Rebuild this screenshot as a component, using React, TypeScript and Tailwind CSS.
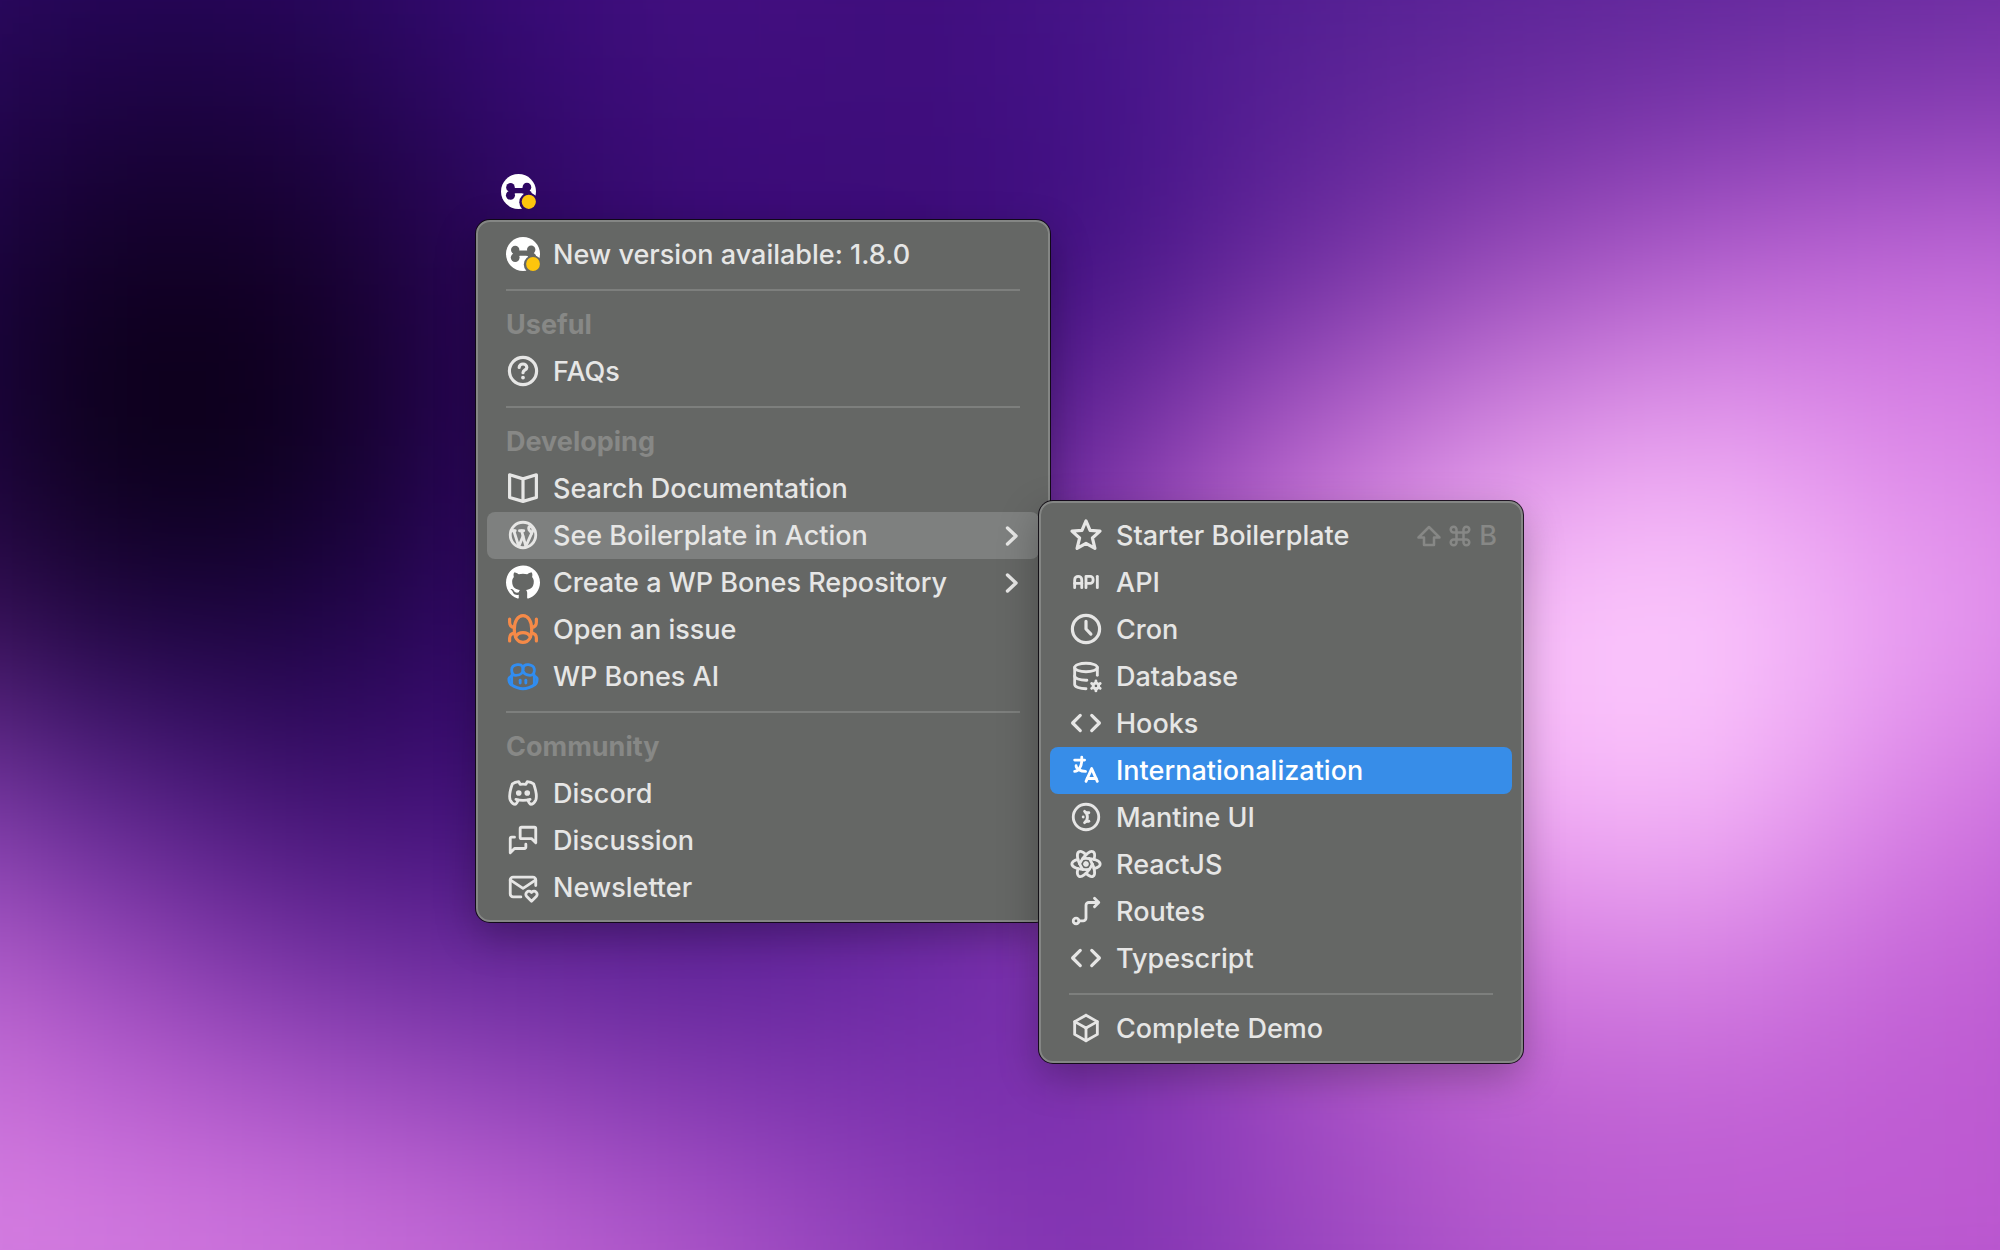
import type { ReactNode } from 'react';
import {
  TbApi,
  TbBox,
  TbBrandDiscord,
  TbBrandGithubCopilot,
  TbBrandMantine,
  TbBrandReact,
  TbBrandWordpress,
  TbDatabaseCog,
  TbLanguage,
  TbMailHeart,
  TbMessages,
} from 'react-icons/tb';
import { SiGithub } from 'react-icons/si';

/* Colour mesh of the wallpaper, blurred together; the outermost cells lie past the window's edges. */
const mesh: string[][] = [
  ['#2e0a66', '#290760', '#2b0762', '#370b78', '#4a1285', '#3f0d7c', '#471588', '#521f92', '#5a2398', '#5e269a', '#64299c', '#6a2ca0'],
  ['#2c0960', '#1d0344', '#1f0448', '#330970', '#3f0e7e', '#3f0d7c', '#44128a', '#562094', '#63289a', '#6f2ea4', '#7a34aa', '#8238b0'],
  ['#22064e', '#100022', '#130026', '#2a0658', '#3a0b75', '#3a0a75', '#3f1080', '#6a2a9e', '#9748b8', '#b860d0', '#c56adb', '#c86edc'],
  ['#240550', '#080012', '#0b0018', '#2c065e', '#360a72', '#3c0c78', '#6f2ba0', '#b862cc', '#e092e8', '#efa8f4', '#dd88e8', '#d880e4'],
  ['#44155f', '#1c0440', '#1a0340', '#340a6a', '#3a0d78', '#451080', '#9a45b8', '#dd88e4', '#fbc4fb', '#ffd2ff', '#eca2f4', '#e08cea'],
  ['#8a44b4', '#5c2590', '#3e1070', '#3f0e78', '#4a1685', '#5e1f98', '#9040b4', '#d078dc', '#f4b0f6', '#fabefb', '#da82e6', '#c868da'],
  ['#c66ed6', '#a44ec2', '#7c36aa', '#6c2ca0', '#602498', '#6c2aa6', '#7a30ac', '#a850c4', '#cf72dc', '#d47ce2', '#c262d6', '#bc58d2'],
  ['#d880e2', '#cc70dc', '#c266d6', '#b058cc', '#9a48c0', '#8638b4', '#7a2eae', '#9a46c0', '#b458cc', '#bd5cd2', '#be5ad2', '#bc58d0'],
  ['#dc86e6', '#da82e4', '#d67ce2', '#d072dc', '#bc60d2', '#9c48c0', '#8836b4', '#9a46c0', '#b85ad0', '#be5cd4', '#be5ad2', '#bc58d0'],
];

function Wallpaper() {
  return (
    <div aria-hidden="true" className="absolute inset-0 overflow-hidden">
      <div className="absolute -inset-x-[10%] -inset-y-[14.3%] grid grid-cols-12 grid-rows-9 blur-[96px]">
        {mesh.map((row, r) =>
          row.map((color, c) => <span key={`${r}-${c}`} style={{ backgroundColor: color }} />),
        )}
      </div>
    </div>
  );
}

function BoneIcon({ id }: { id: string }) {
  return (
    <svg viewBox="0 0 34 34" className="size-full" aria-hidden="true">
      <mask id={id}>
        <rect width="34" height="34" fill="#fff" />
        <g fill="#000">
          <circle cx="9.2" cy="13" r="4.2" />
          <circle cx="9.2" cy="20.6" r="4.4" />
          <circle cx="25.2" cy="12.8" r="4.2" />
          <circle cx="26" cy="20" r="4.2" />
          <path d="M8.5 12.5 13 13.500h8.500l4.500-1v7.500l-6-1.200h-6l-4 1.500-3-4z" />
          <circle cx="27" cy="27.400" r="9.200" />
        </g>
      </mask>
      <circle cx="17" cy="17" r="17" fill="#fff" mask={`url(#${id})`} />
      <circle cx="27" cy="27" r="6.900" fill="#fdc50d" />
    </svg>
  );
}

function Stroke({ children }: { children: ReactNode }) {
  return (
    <svg
      viewBox="0 0 16 16"
      className="size-full"
      fill="none"
      stroke="currentColor"
      strokeWidth="1.5"
      strokeLinecap="round"
      strokeLinejoin="round"
      aria-hidden="true"
    >
      {children}
    </svg>
  );
}

const QuestionIcon = () => (
  <Stroke>
    <circle cx="8" cy="8" r="6.4" />
    <path d="M6.2 6.3C6.2 5.3 7 4.7 8 4.7s1.8.6 1.8 1.6C9.800 7.500 8 7.500 8 8.800" />
    <circle cx="8" cy="11.100" r=".4" fill="currentColor" strokeWidth="1" />
  </Stroke>
);

const BookIcon = () => (
  <Stroke>
    <path d="M8 3.700 1.700 1.800v10.700L8 14.300l6.300-1.800V1.800L8 3.700v10.200" />
  </Stroke>
);

const BugIcon = () => (
  <Stroke>
    <path d="M8 1.700c2.400 0 4.100 2.600 4.100 6.400S10.600 14.300 8 14.300 3.900 11.900 3.900 8.100 5.600 1.700 8 1.700Z" />
    <path d="M4.500 11.700C5.200 10.300 6.500 9.700 8 9.700s2.800.6 3.500 2" />
    <path d="M1.700 3.300v1.500c0 1.500.7 2.300 2.300 2.500M14.300 3.300v1.500c0 1.500-.7 2.300-2.300 2.500M1.700 13.600v-1.400c0-1.300.9-2.100 2.300-2.400M14.300 13.600v-1.400c0-1.300-.9-2.100-2.300-2.400" />
  </Stroke>
);

const StarIcon = () => (
  <Stroke>
    <path d="m8 1.400 1.900 4.400 4.700.4-3.600 3.200 1.200 4.900L8 11.900l-4.200 2.400L5 9.400 1.400 6.200l4.700-.4L8 1.400Z" />
  </Stroke>
);

const ClockIcon = () => (
  <Stroke>
    <circle cx="8" cy="8" r="6.400" />
    <path d="M8 4.400V8l2.300 2.400" />
  </Stroke>
);

const CodeIcon = () => (
  <Stroke>
    <path d="M5.300 4.400 1.700 8l3.600 3.600M10.700 4.400 14.300 8l-3.600 3.600" />
  </Stroke>
);

const RouteIcon = () => (
  <svg
    viewBox="0 0 24 24"
    className="size-full"
    fill="none"
    stroke="currentColor"
    strokeWidth="2"
    strokeLinecap="round"
    strokeLinejoin="round"
    aria-hidden="true"
  >
    <circle cx="5" cy="19" r="2" />
    <path d="M7 19h3a2 2 0 0 0 2-2V8a2 2 0 0 1 2-2h7M18 3l3 3-3 3" />
  </svg>
);

const ChevronIcon = () => (
  <svg
    viewBox="0 0 14 20"
    className="h-5 w-3.5"
    fill="none"
    stroke="currentColor"
    strokeWidth="3.400"
    strokeLinecap="round"
    strokeLinejoin="round"
    aria-hidden="true"
  >
    <path d="M2.500 2 11 10l-8.500 8" />
  </svg>
);

const ShiftIcon = () => (
  <svg
    viewBox="0 0 24 22"
    className="h-[22px] w-6"
    fill="none"
    stroke="currentColor"
    strokeWidth="2.500"
    strokeLinejoin="round"
    aria-hidden="true"
  >
    <path d="M12 2 1.500 12.500H7V20h10v-7.500h5.500L12 2Z" />
  </svg>
);

const CommandIcon = () => (
  <svg
    viewBox="0 0 22 22"
    className="size-[22px]"
    fill="none"
    stroke="currentColor"
    strokeWidth="2.500"
    aria-hidden="true"
  >
    <path d="M7.500 7.500h7v7h-7zM7.500 7.500V4.700a2.900 2.900 0 1 0-2.900 2.800zM14.500 7.500V4.700a2.900 2.900 0 1 1 2.900 2.800zM7.500 14.500v2.800a2.900 2.900 0 1 1-2.900-2.800zM14.500 14.500v2.800a2.900 2.900 0 1 0 2.900-2.800z" />
  </svg>
);

type ItemProps = {
  icon: ReactNode;
  label: string;
  tone?: string;
  state?: 'open' | 'selected';
  submenu?: boolean;
  shortcut?: ReactNode;
  children?: ReactNode;
};

function Item({ icon, label, tone = '', state, submenu, shortcut, children }: ItemProps) {
  const surface =
    state === 'open' ? 'bg-[#7e807f]' : state === 'selected' ? 'bg-[#378de8] text-white' : '';
  return (
    <li role="none" className="relative">
      <button
        type="button"
        role="menuitem"
        aria-haspopup={submenu ? 'menu' : undefined}
        aria-expanded={submenu ? state === 'open' : undefined}
        className={`flex h-[47px] w-full items-center rounded-lg pr-[15px] pl-[19px] text-left ${surface}`}
      >
        <span className={`mb-0.5 flex size-[34px] shrink-0 items-center justify-center ${tone}`}>{icon}</span>
        <span className="ml-[13px] grow whitespace-nowrap">{label}</span>
        {submenu && (
          <span className="mr-[5px]">
            <ChevronIcon />
          </span>
        )}
        {shortcut}
      </button>
      {children}
    </li>
  );
}

const Heading = ({ children }: { children: string }) => (
  <li role="presentation" className="flex h-[47px] items-center pl-[19px] font-bold text-[#878886]">
    {children}
  </li>
);

const Separator = () => (
  <li role="separator" className="flex h-[23px] items-center px-[19px]">
    <span className="h-0.5 w-full bg-[#7d7f7d]" />
  </li>
);

const panel =
  'rounded-[14px] border-2 border-[#848684] bg-[#656765] p-[9px] shadow-[0_0_0_1px_rgba(12,8,16,0.9),0_14px_40px_rgba(0,0,0,0.28)]';

export default function App() {
  return (
    <main className="relative min-h-screen overflow-hidden bg-[#3a0c76] pt-[174px] pb-16 pl-[476px] font-['Inter','Liberation_Sans',sans-serif] text-[27px] leading-[34px] font-medium text-[#e6e6e5]">
      <Wallpaper />
      <div className="relative">
        <button type="button" aria-label="WP Bones" className="ml-[25px] block size-[35px]">
          <BoneIcon id="bone-tray" />
        </button>

        <ul role="menu" aria-label="WP Bones" className={`mt-[11px] w-[574px] ${panel}`}>
          <Item icon={<BoneIcon id="bone-menu" />} label="New version available: 1.8.0" />
          <Separator />
          <Heading>Useful</Heading>
          <Item icon={<QuestionIcon />} label="FAQs" />
          <Separator />
          <Heading>Developing</Heading>
          <Item icon={<BookIcon />} label="Search Documentation" />
          <Item icon={<TbBrandWordpress className="size-full" />} label="See Boilerplate in Action" state="open" submenu>
            <ul
              role="menu"
              aria-label="See Boilerplate in Action"
              className={`absolute -top-[11px] left-full z-10 w-[484px] ${panel}`}
            >
              <Item
                icon={<StarIcon />}
                label="Starter Boilerplate"
                shortcut={
                  <kbd className="flex items-center gap-2 font-['Inter'] text-[#878886]" aria-label="Shift Command B">
                    <ShiftIcon />
                    <CommandIcon />
                    <span>B</span>
                  </kbd>
                }
              />
              <Item icon={<TbApi className="size-full" />} label="API" />
              <Item icon={<ClockIcon />} label="Cron" />
              <Item icon={<TbDatabaseCog className="size-full" />} label="Database" />
              <Item icon={<CodeIcon />} label="Hooks" />
              <Item icon={<TbLanguage className="size-full" />} label="Internationalization" state="selected" />
              <Item icon={<TbBrandMantine className="size-full" />} label="Mantine UI" />
              <Item icon={<TbBrandReact className="size-full" />} label="ReactJS" />
              <Item icon={<RouteIcon />} label="Routes" />
              <Item icon={<CodeIcon />} label="Typescript" />
              <Separator />
              <Item icon={<TbBox className="size-full" />} label="Complete Demo" />
            </ul>
          </Item>
          <Item icon={<SiGithub className="size-full" />} tone="text-white" label="Create a WP Bones Repository" submenu />
          <Item icon={<BugIcon />} tone="text-[#f58a48]" label="Open an issue" />
          <Item icon={<TbBrandGithubCopilot className="size-full" />} tone="text-[#318df0]" label="WP Bones AI" />
          <Separator />
          <Heading>Community</Heading>
          <Item icon={<TbBrandDiscord className="size-full" />} label="Discord" />
          <Item icon={<TbMessages className="size-full" />} label="Discussion" />
          <Item icon={<TbMailHeart className="size-full" />} label="Newsletter" />
        </ul>
      </div>
    </main>
  );
}
